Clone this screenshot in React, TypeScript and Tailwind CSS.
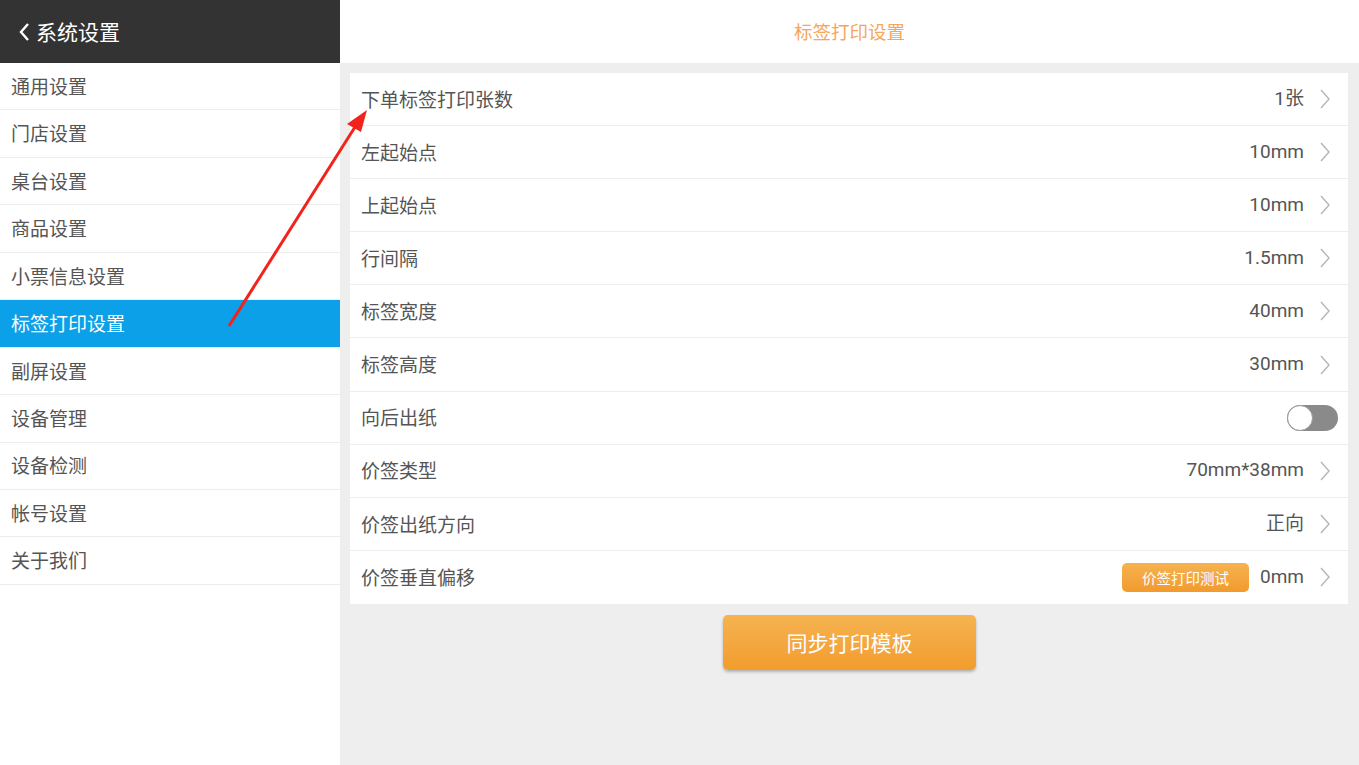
import React, { useState } from "react"

const menu = [
  "通用设置",
  "门店设置",
  "桌台设置",
  "商品设置",
  "小票信息设置",
  "标签打印设置",
  "副屏设置",
  "设备管理",
  "设备检测",
  "帐号设置",
  "关于我们"
]

interface SettingRow {
  label: string
  value?: string
  kind?: "toggle" | "test"
}

const rows: SettingRow[] = [
  { label: "下单标签打印张数", value: "1张" },
  { label: "左起始点", value: "10mm" },
  { label: "上起始点", value: "10mm" },
  { label: "行间隔", value: "1.5mm" },
  { label: "标签宽度", value: "40mm" },
  { label: "标签高度", value: "30mm" },
  { label: "向后出纸", kind: "toggle" },
  { label: "价签类型", value: "70mm*38mm" },
  { label: "价签出纸方向", value: "正向" },
  { label: "价签垂直偏移", value: "0mm", kind: "test" }
]

const Chevron = () => (
  <svg width="14" height="24" viewBox="0 0 14 24" className="ml-[14px] mr-[2px]">
    <path d="M3 3 L11 12 L3 21" fill="none" stroke="#b5b5b5" strokeWidth="1.4" />
  </svg>
)

export default function App() {
  const [active] = useState(5)
  const [backFeed, setBackFeed] = useState(false)

  return (
    <div
      className="relative flex w-[1359px] h-[765px] overflow-hidden bg-white"
      style={{ fontFamily: '"Noto Sans CJK SC", "Noto Sans", sans-serif' }}
    >
      {/* Sidebar */}
      <div className="w-[340px] flex flex-col bg-white">
        <div className="h-[63px] bg-[#333333] flex items-center pl-[17px] text-white text-[21px]">
          <svg width="14" height="22" viewBox="0 0 14 22" className="mr-[5px]">
            <path d="M11 3 L4 11 L11 19" fill="none" stroke="#fff" strokeWidth="2.4" />
          </svg>
          系统设置
        </div>
        {menu.map((m, i) => (
          <div
            key={m}
            className={`h-[47.45px] flex items-center pl-[11px] text-[19px] border-b border-[#ececec] ${
              i === active ? "bg-[#0ba0e7] text-white" : "text-[#555555]"
            }`}
          >
            {m}
          </div>
        ))}
      </div>

      {/* Main */}
      <div className="flex-1 flex flex-col bg-[#eeeeee]">
        <div className="h-[63px] bg-white flex items-center justify-center text-[18.5px] text-[#f6a65a]">
          标签打印设置
        </div>
        <div className="mt-[10px] ml-[10px] mr-[11px] bg-white">
          {rows.map((r, i) => (
            <div
              key={r.label}
              className={`h-[53.1px] flex items-center pl-[11px] pr-[14px] text-[19px] text-[#555555] ${
                i < rows.length - 1 ? "border-b border-[#ededed]" : ""
              }`}
            >
              <span className="flex-1">{r.label}</span>
              {r.kind === "toggle" ? (
                <button
                  onClick={() => setBackFeed(!backFeed)}
                  className="relative w-[51px] h-[26px] rounded-full bg-[#8a8a8a] mr-[-4px]"
                >
                  <span className="absolute left-0 top-0 w-[26px] h-[26px] rounded-full bg-white border border-[#9a9a9a]" />
                </button>
              ) : (
                <>
                  {r.kind === "test" && (
                    <span className="mr-[11px] h-[29px] w-[127px] rounded-[5px] bg-gradient-to-b from-[#f6b24f] to-[#f29a2c] text-white text-[14.5px] flex items-center justify-center">
                      价签打印测试
                    </span>
                  )}
                  <span className="text-[19px]" style={{ fontFamily: '"Roboto", "Noto Sans CJK SC", sans-serif' }}>
                    {r.value}
                  </span>
                  <Chevron />
                </>
              )}
            </div>
          ))}
        </div>
        <div className="flex justify-center mt-[11px]">
          <button className="w-[253px] h-[55px] rounded-[5px] bg-gradient-to-b from-[#f6b350] to-[#f29c2d] text-white text-[21px] shadow-[0_2px_3px_rgba(0,0,0,0.25)]">
            同步打印模板
          </button>
        </div>
      </div>

      {/* annotation arrow */}
      <svg className="absolute left-0 top-0 pointer-events-none" width="1359" height="765">
        <line x1="229" y1="326" x2="355" y2="127" stroke="#f2231c" strokeWidth="3" />
        <polygon points="367,110 347,124 361,132" fill="#f2231c" />
      </svg>
    </div>
  )
}
